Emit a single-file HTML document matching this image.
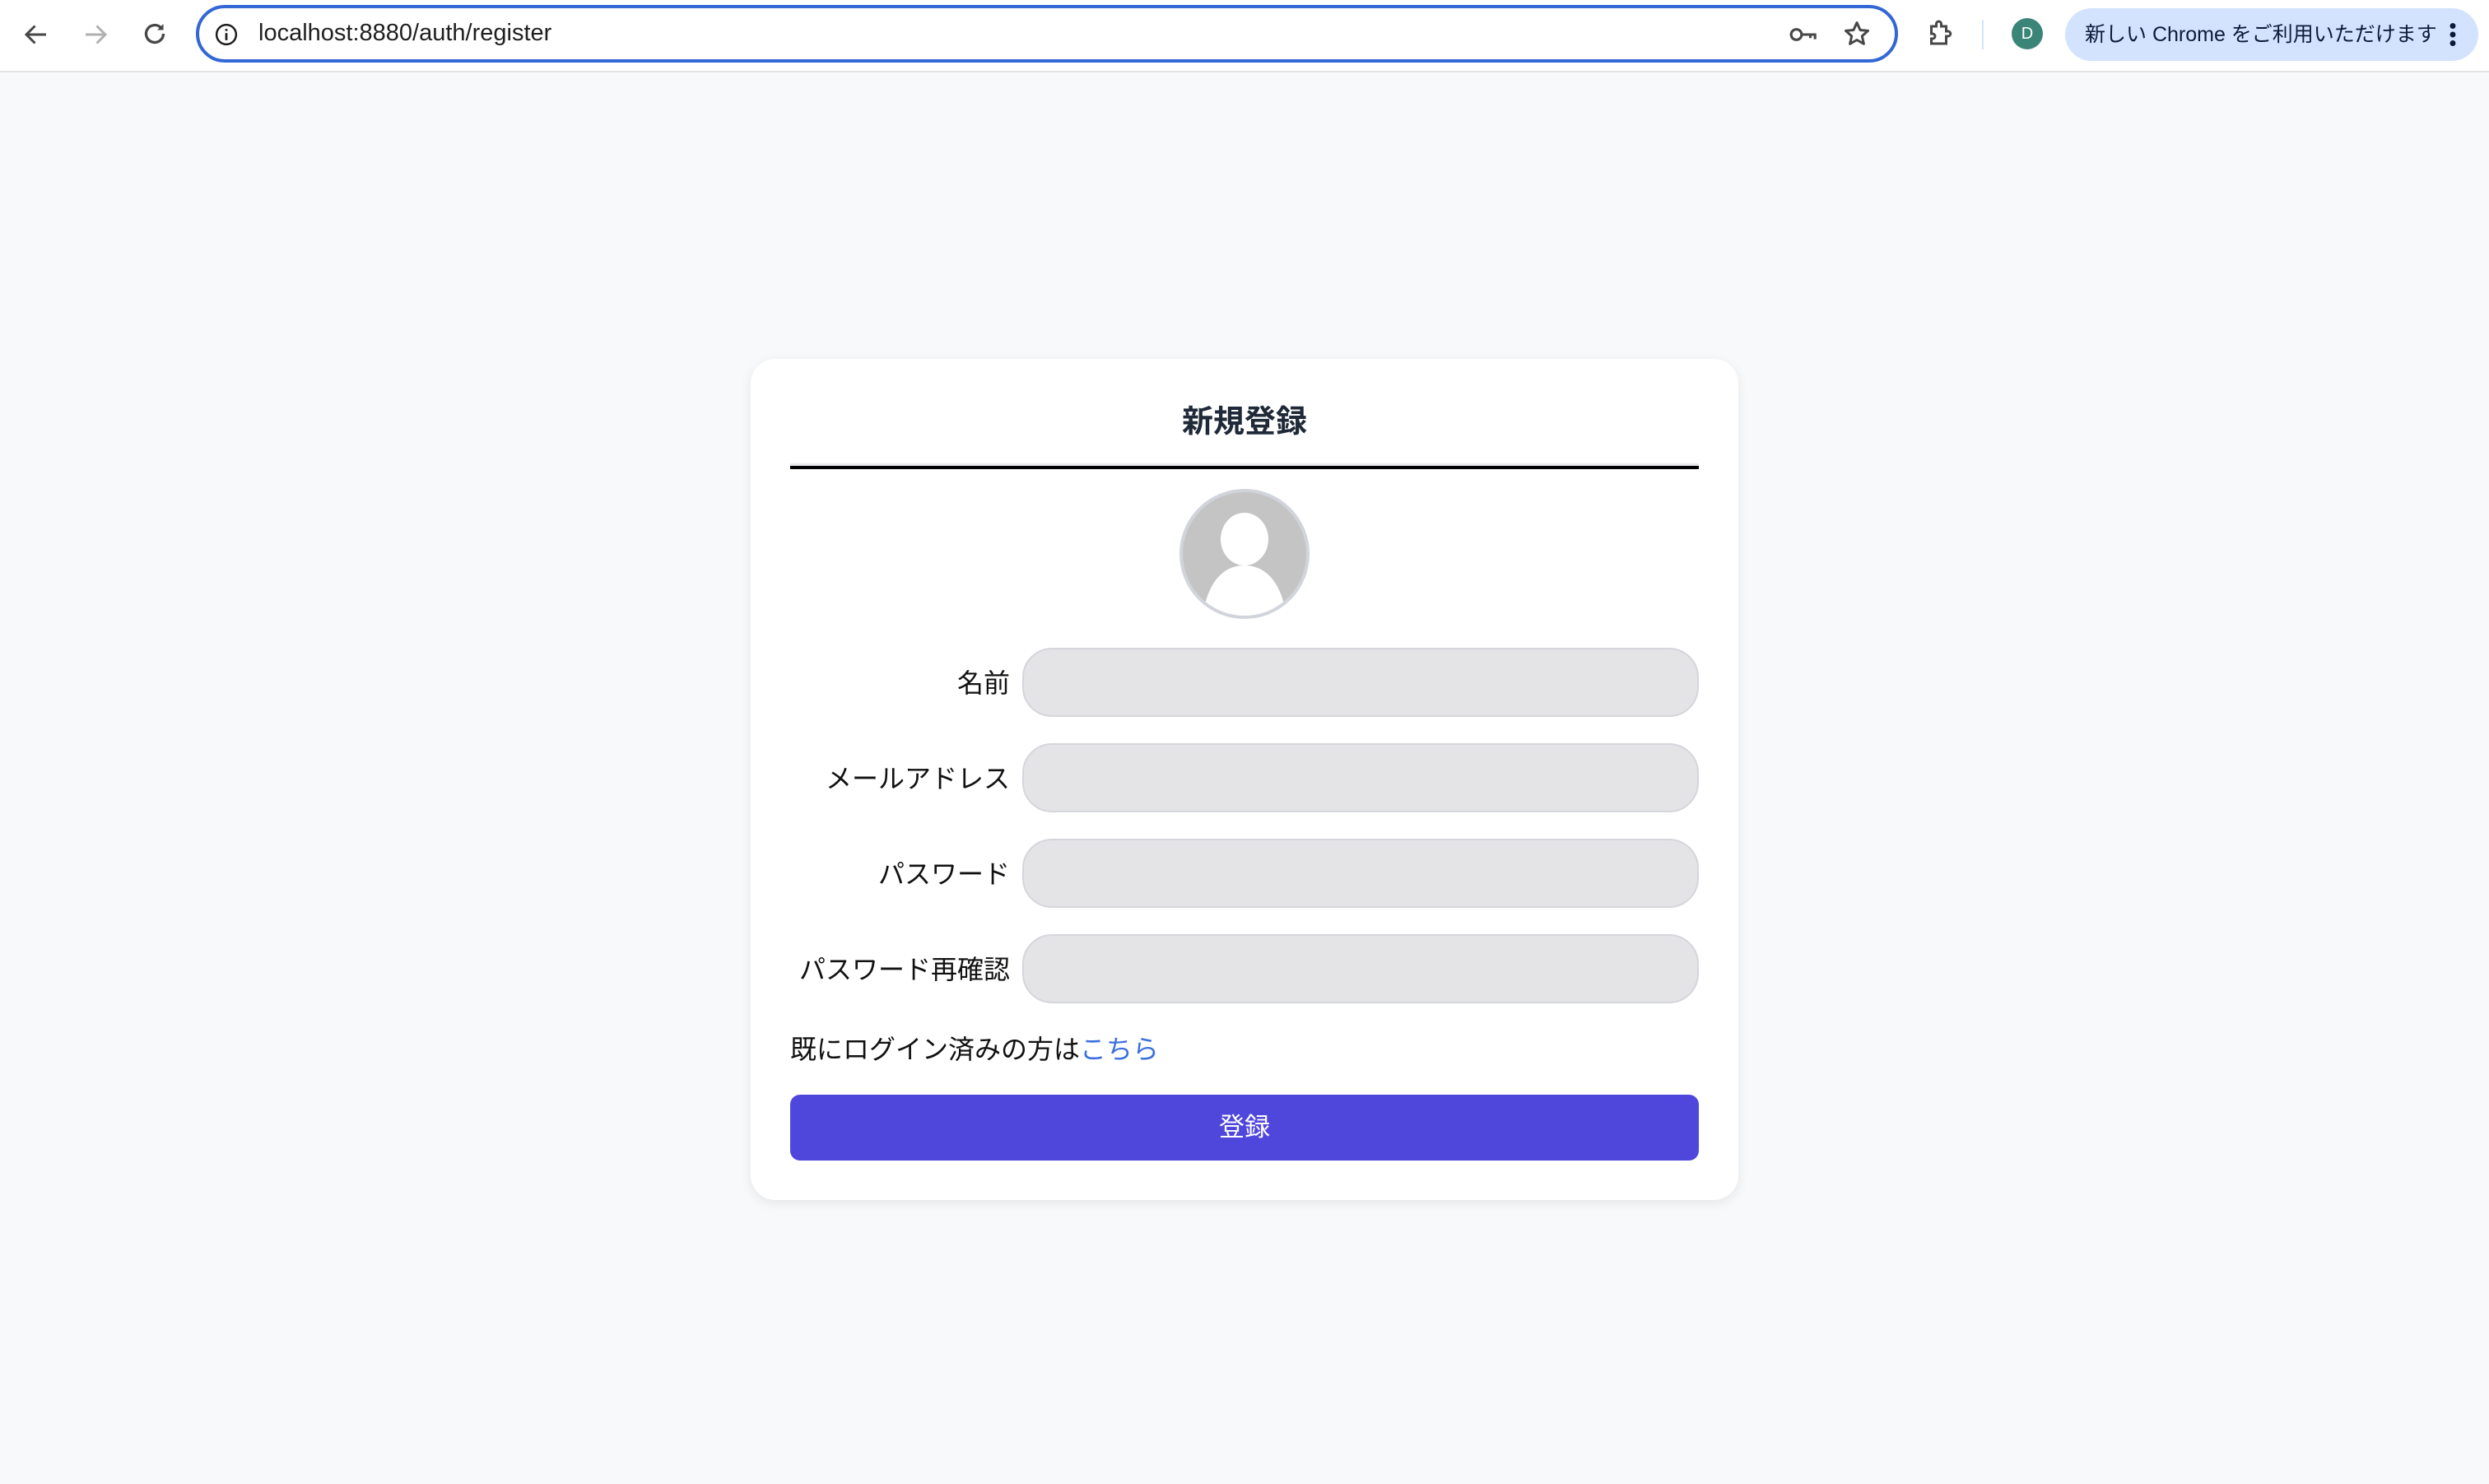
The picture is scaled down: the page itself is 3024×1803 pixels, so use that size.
<!DOCTYPE html>
<html><head><meta charset="utf-8">
<style>
*{box-sizing:border-box;margin:0;padding:0}
html,body{width:3024px;height:1803px;overflow:hidden;background:#f8f9fa;font-family:"Liberation Sans","Noto Sans CJK JP",sans-serif}
.bar{position:absolute;left:0;top:0;width:3024px;height:88px;background:#fff;border-bottom:2px solid #e3e3e3}
.ico{position:absolute}
.addr{position:absolute;left:238px;top:6px;width:2068px;height:70px;border:4px solid #3367d6;border-radius:35px;background:#fff}
.url{position:absolute;left:314px;top:22px;font-size:29px;color:#1f1f1f;line-height:36px}
.pill{position:absolute;left:2509px;top:10px;width:502px;height:64px;border-radius:32px;background:#d3e3fd;font-size:25px;color:#0b1b3a;line-height:64px;padding-left:24px}
.card{position:absolute;left:912px;top:436px;width:1200px;height:1022px;background:#fff;border-radius:30px;box-shadow:0 4px 14px rgba(0,0,0,.08)}
.title{position:absolute;width:1200px;top:486px;text-align:center;font-size:38px;font-weight:bold;color:#1f2937;line-height:54px}
.line{position:absolute;left:960px;top:563px;width:1104px;height:7px;background:#000;border-top:3px solid #e5e7eb}
.lbl{position:absolute;right:1797px;font-size:32px;color:#111;line-height:40px;white-space:nowrap}
.inp{position:absolute;left:1242px;width:822px;height:84px;background:#e4e4e7;border:2px solid #d4d6db;border-radius:36px}
.login{position:absolute;left:960px;top:1255px;font-size:32px;color:#111;line-height:40px}
.login span{color:#3b6fe0}
.btn{position:absolute;left:960px;top:1330px;width:1104px;height:80px;background:#4f46dc;border-radius:12px;color:#fff;font-size:31px;line-height:80px;text-align:center}
</style></head><body>
<div class="bar">
<svg class="ico" style="left:26px;top:24px" width="36" height="36" viewBox="0 0 24 24"><path d="M20 12H5M11 5l-7 7 7 7" fill="none" stroke="#474747" stroke-width="2"/></svg>
<svg class="ico" style="left:98px;top:24px" width="36" height="36" viewBox="0 0 24 24"><path d="M4 12h15M13 5l7 7-7 7" fill="none" stroke="#b0b0b0" stroke-width="2"/></svg>
<svg class="ico" style="left:170px;top:23px" width="36" height="36" viewBox="0 0 24 24"><path d="M19 12a7 7 0 1 1-2.1-5" fill="none" stroke="#474747" stroke-width="2.2"/><path d="M19 4v5h-5z" fill="#474747"/></svg>
<div class="addr"></div>
<svg class="ico" style="left:260px;top:27px" width="30" height="30" viewBox="0 0 24 24"><circle cx="12" cy="12" r="9.5" fill="none" stroke="#1f1f1f" stroke-width="2"/><path d="M12 10.5v7M12 6.5v2" stroke="#1f1f1f" stroke-width="2.2"/></svg>
<div class="url">localhost:8880/auth/register</div>
<svg class="ico" style="left:2172px;top:25px" width="38" height="34" viewBox="0 0 26 24"><circle cx="7" cy="12" r="4.5" fill="none" stroke="#474747" stroke-width="2.2"/><path d="M11.5 12H23v4M19 12v3" fill="none" stroke="#474747" stroke-width="2.2"/></svg>
<svg class="ico" style="left:2238px;top:23px" width="36" height="36" viewBox="0 0 24 24"><path d="M12 3l2.7 6 6.3.6-4.8 4.3 1.4 6.3L12 17l-5.6 3.2 1.4-6.3L3 9.6 9.3 9z" fill="none" stroke="#474747" stroke-width="2" stroke-linejoin="round"/></svg>
<svg class="ico" style="left:2339px;top:22px" width="36" height="38" viewBox="0 0 24 24"><path d="M5 6h4V4a2 2 0 0 1 4 0v2h4v4h1.5a2 2 0 0 1 0 4H17v6H5v-4h1a2 2 0 0 0 0-4H5z" fill="none" stroke="#474747" stroke-width="2"/></svg>
<div style="position:absolute;left:2408px;top:24px;width:2px;height:36px;background:#d3e3fd"></div>
<div style="position:absolute;left:2444px;top:22px;width:38px;height:38px;border-radius:50%;background:#3a8577;color:#fff;font-size:20px;line-height:38px;text-align:center">D</div>
<div class="pill">新しい Chrome をご利用いただけます</div>
<svg class="ico" style="left:2970px;top:24px" width="20" height="36" viewBox="0 0 8 24"><circle cx="4" cy="5" r="2.3" fill="#0b1b3a"/><circle cx="4" cy="12" r="2.3" fill="#0b1b3a"/><circle cx="4" cy="19" r="2.3" fill="#0b1b3a"/></svg>
</div>
<div class="card"></div>
<div class="title" style="left:912px">新規登録</div>
<div class="line"></div>
<svg class="ico" style="left:1432px;top:593px" width="160" height="160" viewBox="0 0 160 160">
<defs><clipPath id="c"><circle cx="80" cy="80" r="77"/></clipPath></defs>
<circle cx="80" cy="80" r="77" fill="#c4c4c4"/>
<g clip-path="url(#c)" fill="#fff"><ellipse cx="80" cy="62" rx="29" ry="32"/><path d="M80 94c-32 0-48 30-52 70h104c-4-40-20-70-52-70z"/></g>
<circle cx="80" cy="80" r="77" fill="none" stroke="#d1d5db" stroke-width="4"/>
</svg>
<div class="lbl" style="top:810px">名前</div><div class="inp" style="top:787px"></div>
<div class="lbl" style="top:926px">メールアドレス</div><div class="inp" style="top:903px"></div>
<div class="lbl" style="top:1042px">パスワード</div><div class="inp" style="top:1019px"></div>
<div class="lbl" style="top:1158px">パスワード再確認</div><div class="inp" style="top:1135px"></div>
<div class="login">既にログイン済みの方は<span>こちら</span></div>
<div class="btn">登録</div>
</body></html>
